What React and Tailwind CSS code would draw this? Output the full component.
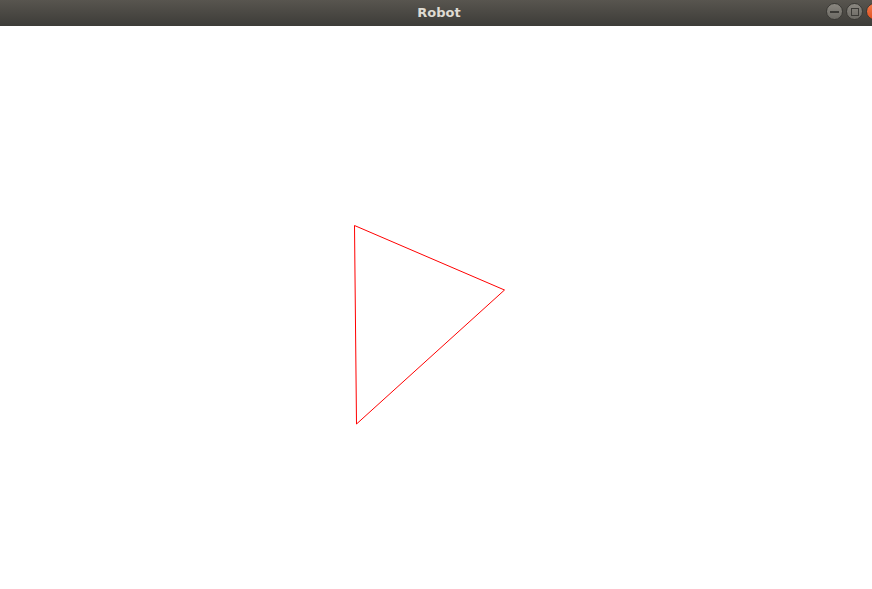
import React from 'react';

function WindowButton({ kind }) {
  if (kind === 'close') {
    return (
      <div className="w-[17px] h-[17px] rounded-full bg-gradient-to-b from-[#f37b4b] to-[#e0501c] border border-[#3a3935] shrink-0" />
    );
  }
  return (
    <div className="w-[17px] h-[17px] rounded-full bg-gradient-to-b from-[#8a8780] to-[#6c6a64] border border-[#3a3935] flex items-center justify-center shrink-0">
      {kind === 'min' ? (
        <div className="w-[9px] h-[2px] bg-[#3c3b37]" />
      ) : (
        <div className="w-[8px] h-[8px] border-[1.5px] border-[#3c3b37]" />
      )}
    </div>
  );
}

export default function App() {
  return (
    <div className="w-[872px] h-[589px] flex flex-col bg-white overflow-hidden">
      {/* title bar */}
      <div className="h-[26px] shrink-0 bg-gradient-to-b from-[#58554f] to-[#3d3c38] relative flex items-center justify-center">
        <span className="text-[#dfdbd2] text-[13px] font-bold pl-[6px]" style={{ fontFamily: '"DejaVu Sans", sans-serif' }}>
          Robot
        </span>
        <div className="absolute left-[826px] top-[3px] flex gap-[3px]">
          <WindowButton kind="min" />
          <WindowButton kind="max" />
          <WindowButton kind="close" />
        </div>
      </div>

      {/* canvas */}
      <div className="flex-1">
        <svg width="872" height="563" viewBox="0 26 872 563" className="block">
          <polygon
            points="354.5,225.5 504.5,290 356.5,424"
            fill="none"
            stroke="#ff0000"
            strokeWidth="1"
          />
        </svg>
      </div>
    </div>
  );
}
